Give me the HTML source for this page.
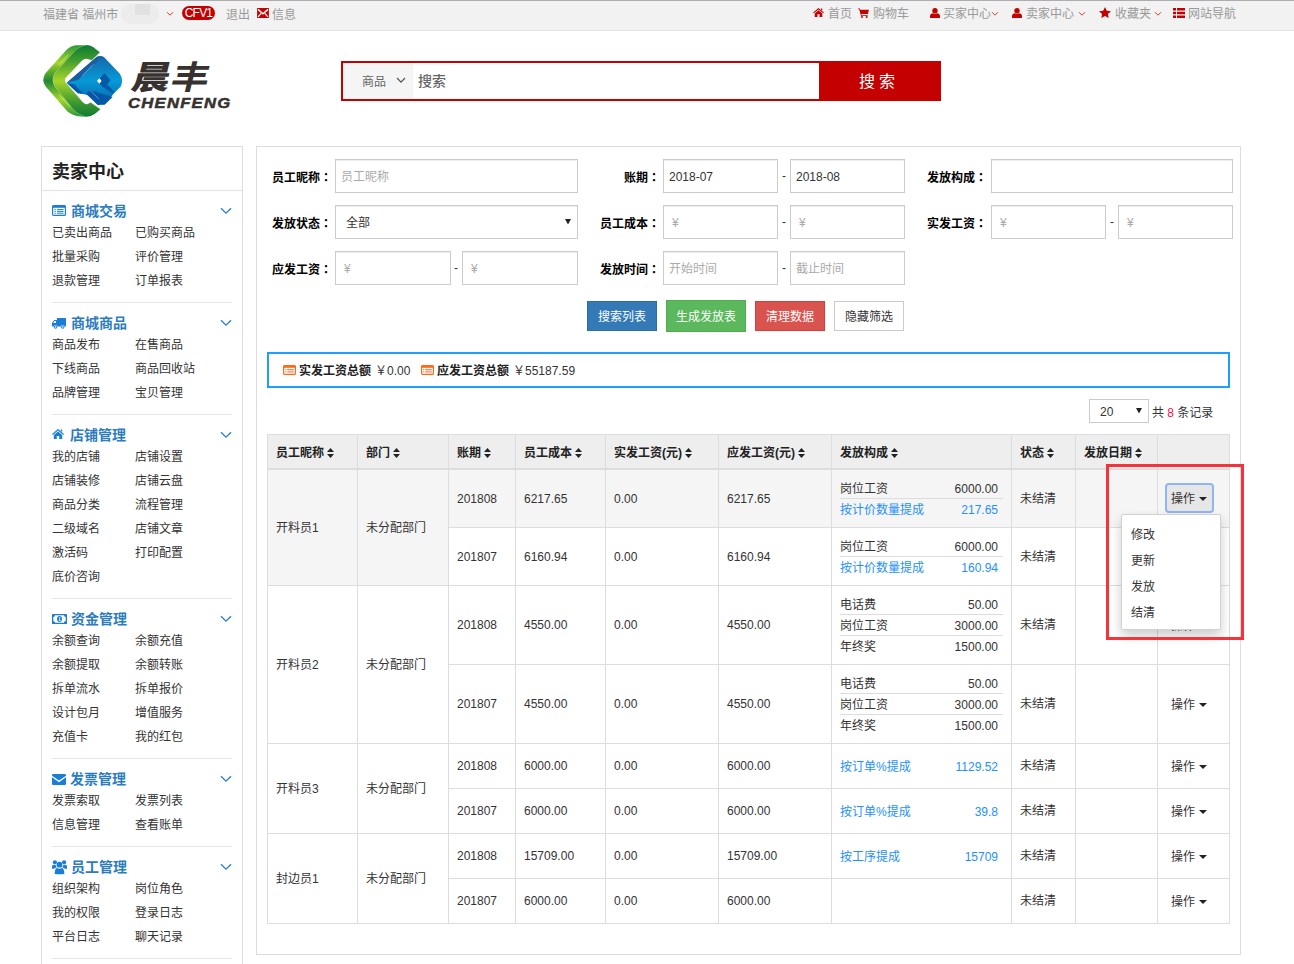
<!DOCTYPE html>
<html lang="zh-CN">
<head>
<meta charset="utf-8">
<title>卖家中心 - 工资发放</title>
<style>
*{box-sizing:border-box;margin:0;padding:0}
html,body{width:1294px;height:964px;overflow:hidden;background:#fff}
body{position:relative;font-family:"Liberation Sans","Noto Sans CJK SC",sans-serif;font-size:12px;color:#333;line-height:1}
.abs{position:absolute;white-space:nowrap}
svg{display:block;position:absolute;overflow:visible}
/* top bar */
#topbar{position:absolute;left:0;top:0;width:1294px;height:31px;background:#f2f2f2;border-top:1px solid #aeacb0;border-bottom:1px solid #e3e3e3}
#topbar .t{position:absolute;top:7px;height:14px;line-height:14px;font-size:12px;color:#999;white-space:nowrap}
#badge{position:absolute;left:182px;top:5px;width:33px;height:14px;border-radius:7px;background:#c40000;color:#fff;font-size:12px;line-height:14px;text-align:center;letter-spacing:-.8px;font-weight:normal}
/* search */
#search{position:absolute;left:341px;top:61px;width:600px;height:40px;border:2px solid #c40000;background:#fff}
#search .sel{position:absolute;left:0;top:0;width:70px;height:36px;background:#f5f5f5}
#search .btn{position:absolute;left:476px;top:-2px;width:122px;height:40px;background:#c40000;color:#fff;font-size:16px;line-height:40px;text-align:center;letter-spacing:4px;padding:1px 2px 0 0}
/* sidebar */
#side{position:absolute;left:41px;top:146px;width:202px;height:830px;border:1px solid #ddd;background:#fff}
#side h2{position:absolute;left:10px;top:15px;font-size:18px;line-height:20px;font-weight:bold;color:#222}
#side .hl{position:absolute;left:0;top:43px;width:200px;height:1px;background:#e2e2e2}
.sec{position:absolute;left:10px;width:180px}
.sec .hd{position:absolute;left:20px;top:0;font-size:14px;line-height:16px;font-weight:bold;color:#2b7cc1;white-space:nowrap}
.sec .lk{position:absolute;margin-top:1px;font-size:12px;line-height:14px;color:#333;white-space:nowrap}
.sec .dv{position:absolute;left:0;width:180px;height:1px;background:#e5e5e5}
/* main */
#main{position:absolute;left:256px;top:146px;width:985px;height:809px;border:1px solid #ddd;background:#fff}
.lb{position:absolute;font-weight:bold;color:#000;font-size:12px;line-height:14px;white-space:nowrap;text-align:right}
.ip{position:absolute;height:34px;border:1px solid #ccc;background:#fff;box-shadow:inset 0 1px 1px rgba(0,0,0,.075);font-size:12px;line-height:34px;padding-left:5px;color:#333;white-space:nowrap}
.ip.ph{color:#aaa}
.ds{position:absolute;font-size:12px;line-height:14px;color:#333}
.bt{position:absolute;top:154px;height:30px;font-size:12px;line-height:30px;text-align:center;color:#fff;white-space:nowrap}

#tb{position:absolute;left:10px;top:287px;width:963px;table-layout:fixed;border-collapse:separate;border-spacing:0;border-left:1px solid #ddd;border-top:1px solid #ddd;font-size:12px;color:#333}
#tb th{height:35px;background:#eee;border-right:1px solid #ddd;border-bottom:2px solid #ddd;text-align:left;padding:2px 0 0 8px;font-weight:bold;color:#222;white-space:nowrap;vertical-align:middle;line-height:14px}
#tb th .so{position:static;display:inline-block;vertical-align:-1px;margin-left:3px}
#tb td{border-right:1px solid #ddd;border-bottom:1px solid #ddd;padding:0 8px;vertical-align:middle;line-height:14px;white-space:nowrap;background:#fff}
#tb tr.hv td{background:#f5f5f5}
.it{height:21px;line-height:22px;border-bottom:1px solid #ddd;position:relative}
.it.last{height:20px;border-bottom:0}
.it b{position:absolute;right:5px;top:0;font-weight:normal}
.it.bl{color:#1e90ff}
.op{display:inline-block;margin-left:5px;color:#333;line-height:14px;position:relative;top:1px}
.op i{display:inline-block;width:0;height:0;border-left:4px solid transparent;border-right:4px solid transparent;border-top:4px solid #222;margin-left:4px;vertical-align:2px}
#dd li{height:26px;line-height:26px;padding-left:9px;font-size:12px;color:#333}
.cl{font-family:"Noto Sans CJK JP",sans-serif}
</style>
</head>
<body>

<!-- ============ TOP BAR ============ -->
<div id="topbar">
  <span class="t" style="left:43px">福建省 福州市</span>
  <span class="abs" style="left:121px;top:3px;width:38px;height:20px;border-radius:10px;background:#ececec;overflow:hidden"><span class="abs" style="left:14px;top:0;width:15px;height:11px;background:#e1e1e1"></span></span>
  <svg style="left:166px;top:10px" width="8" height="6" viewBox="0 0 8 6"><path d="M1 1.2 L4 4.2 L7 1.2" fill="none" stroke="#cf3a3a" stroke-width="1"/></svg>
  <span id="badge">CFV1</span>
  <span class="t" style="left:226px">退出</span>
  <svg style="left:257px;top:7px" width="12" height="10" viewBox="0 0 13 11"><rect x="0" y="0" width="13" height="11" fill="#c40000"/><path d="M1 1.5 L6.5 6.3 L12 1.5" fill="none" stroke="#fff" stroke-width="1.5"/><path d="M1 9.8 L4.6 6 M12 9.8 L8.4 6" fill="none" stroke="#fff" stroke-width="1.3"/></svg>
  <span class="t" style="left:272px">信息</span>

  <svg style="left:813px;top:7px" width="11" height="9" viewBox="0 0 12 10"><path d="M6 0 L12 5 L11.2 5.9 L6 1.6 L0.8 5.9 L0 5 Z M6 2.6 L10.2 6 V10 H7.2 V7 H4.8 V10 H1.8 V6 Z M8.7 .5 H10.2 V3 L8.7 1.8 Z" fill="#c40000"/></svg>
  <span class="t" style="left:828px;top:6px">首页</span>
  <svg style="left:858px;top:7px" width="11" height="10" viewBox="0 0 12 11"><path d="M0 0.5 H2 L2.5 2 H12 L10.8 6.5 H3.6 L3.9 7.6 H10.6 V8.6 H3.1 L1.3 1.5 H0 Z" fill="#c40000"/><circle cx="4.3" cy="9.8" r="1.1" fill="#c40000"/><circle cx="9.5" cy="9.8" r="1.1" fill="#c40000"/></svg>
  <span class="t" style="left:873px;top:6px">购物车</span>
  <svg style="left:930px;top:7px" width="10" height="10" viewBox="0 0 10 10"><circle cx="5" cy="2.7" r="2.7" fill="#c40000"/><path d="M0 10 V8.2 Q0 5.6 3 5.2 Q5 6.4 7 5.2 Q10 5.6 10 8.2 V10 Z" fill="#c40000"/></svg>
  <span class="t" style="left:943px;top:6px">买家中心</span>
  <svg style="left:991px;top:10px" width="8" height="6" viewBox="0 0 8 6"><path d="M1 1.2 L4 4.2 L7 1.2" fill="none" stroke="#cf3a3a" stroke-width="1"/></svg>
  <svg style="left:1012px;top:7px" width="10" height="10" viewBox="0 0 10 10"><circle cx="5" cy="2.7" r="2.7" fill="#c40000"/><path d="M0 10 V8.2 Q0 5.6 3 5.2 Q5 6.4 7 5.2 Q10 5.6 10 8.2 V10 Z" fill="#c40000"/></svg>
  <span class="t" style="left:1026px;top:6px">卖家中心</span>
  <svg style="left:1078px;top:10px" width="8" height="6" viewBox="0 0 8 6"><path d="M1 1.2 L4 4.2 L7 1.2" fill="none" stroke="#cf3a3a" stroke-width="1"/></svg>
  <svg style="left:1099px;top:6px" width="12" height="11" viewBox="0 0 12 11"><path d="M6 0 L7.8 3.8 L12 4.3 L8.9 7.1 L9.7 11 L6 9 L2.3 11 L3.1 7.1 L0 4.3 L4.2 3.8 Z" fill="#c40000"/></svg>
  <span class="t" style="left:1115px;top:6px">收藏夹</span>
  <svg style="left:1154px;top:10px" width="8" height="6" viewBox="0 0 8 6"><path d="M1 1.2 L4 4.2 L7 1.2" fill="none" stroke="#cf3a3a" stroke-width="1"/></svg>
  <svg style="left:1173px;top:7px" width="12" height="10" viewBox="0 0 12 10"><path d="M0 0 H3 V2.4 H0 Z M4 0 H12 V2.4 H4 Z M0 3.8 H3 V6.2 H0 Z M4 3.8 H12 V6.2 H4 Z M0 7.6 H3 V10 H0 Z M4 7.6 H12 V10 H4 Z" fill="#c40000"/></svg>
  <span class="t" style="left:1188px;top:6px">网站导航</span>
</div>

<!-- ============ LOGO ============ -->
<div id="logo" class="abs" style="left:36px;top:38px;width:200px;height:86px">
  <svg style="left:0;top:0" width="100" height="86" viewBox="0 0 1121 964">
    <defs>
      <linearGradient id="gA" x1="0" y1="0" x2="0" y2="1"><stop offset="0" stop-color="#2a9a3c"/><stop offset=".24" stop-color="#a4d42a"/><stop offset=".5" stop-color="#1f8836"/><stop offset=".76" stop-color="#a4d42a"/><stop offset="1" stop-color="#2a9a3c"/></linearGradient>
      <linearGradient id="gB" x1="0" y1="0" x2="0" y2="1"><stop offset="0" stop-color="#0d7a33"/><stop offset=".2" stop-color="#3f9a2f"/><stop offset=".5" stop-color="#a6d52b"/><stop offset=".8" stop-color="#3f9a2f"/><stop offset="1" stop-color="#0d7a33"/></linearGradient>
      <linearGradient id="gC" x1="0" y1="0" x2="0" y2="1"><stop offset="0" stop-color="#1766ae"/><stop offset=".5" stop-color="#069ad6"/><stop offset="1" stop-color="#0a62ae"/></linearGradient>
    </defs>
    <!-- green C : side band -->
    <path d="M450 80 Q385 88 340 135 L108 392 Q55 468 108 545 L350 822 Q410 876 505 880 L565 882 Q462 852 420 802 L213 547 Q163 470 213 393 L440 140 Q482 100 560 80 Z" fill="url(#gA)"/>
    <!-- green C : front band -->
    <path d="M560 80 Q482 100 440 140 L213 393 Q163 470 213 547 L420 802 Q462 852 565 882 Q625 880 662 850 L722 800 L612 722 L575 742 Q545 748 520 716 L335 502 Q312 470 338 440 L520 250 Q545 224 580 234 L625 250 L716 160 L640 100 Q600 78 560 80 Z" fill="url(#gB)"/>
    <path d="M255 300 L360 190 M262 640 L380 770" stroke="#eaf7c8" stroke-width="7" stroke-linecap="round" opacity=".85"/>
    <!-- blue body -->
    <path d="M345 502 L682 210 Q722 195 762 212 L940 402 Q985 472 950 545 L880 615 L770 745 L690 748 L590 640 L500 625 Z" fill="url(#gC)"/>
    <path d="M345 502 L682 210 L745 206 L470 470 Z" fill="#1b5e9f"/>
    <path d="M345 504 L432 520 L525 622 L470 622 Z" fill="#0557a8"/>
    <path d="M560 625 L602 585 L860 662 L770 745 L690 748 Z" fill="#0557a8"/>
    <path d="M768 395 L835 470 L800 522 L882 612 L850 616 L738 540 L690 480 Z" fill="#0459a9"/>
    <path d="M684 480 L712 450 L736 482 L710 512 Z" fill="#fff"/>
    <path d="M520 420 L640 300 M610 590 L700 680" stroke="#d8efff" stroke-width="6" stroke-linecap="round" opacity=".8"/>
  </svg>
  <span class="abs" id="lg1" style="left:93px;top:13px;font-family:'Noto Sans CJK SC',sans-serif;font-weight:700;font-size:38px;line-height:42px;color:#37312f;transform:skewX(-14deg) scaleY(.86);transform-origin:0 100%;letter-spacing:1px"><span style="font-weight:900">晨</span>丰</span>
  <span class="abs" id="lg2" style="left:92px;top:57px;font-family:'Liberation Sans',sans-serif;font-weight:bold;font-style:italic;font-size:14.6px;line-height:16px;color:#37312f;letter-spacing:1.1px;-webkit-text-stroke:.5px #37312f;transform:scaleX(1.14);transform-origin:0 50%">CHENFENG</span>
</div>

<!-- ============ SEARCH ============ -->
<div id="search">
  <div class="sel"></div>
  <span class="abs" style="left:19px;top:12px;font-size:12px;line-height:14px;color:#666">商品</span>
  <svg style="left:53px;top:14px" width="10" height="7" viewBox="0 0 10 7"><path d="M1 1 L5 5.2 L9 1" fill="none" stroke="#555" stroke-width="1.2"/></svg>
  <span class="abs" style="left:75px;top:10px;font-size:14px;line-height:16px;color:#666;font-weight:500">搜索</span>
  <div class="btn">搜索</div>
</div>

<!-- ============ SIDEBAR ============ -->
<div id="side">
  <h2>卖家中心</h2>
  <div class="hl"></div>
  <div class="sec" style="top:56px;height:100px">
    <svg style="left:0;top:2px" width="14" height="11" viewBox="0 0 14 11"><rect x=".6" y=".6" width="12.8" height="9.8" rx="1" fill="none" stroke="#1b7ed6" stroke-width="1.2"/><rect x=".6" y=".6" width="12.8" height="2.2" fill="#1b7ed6"/><path d="M2.5 4.6 H3.8 M5 4.6 H11.6 M2.5 6.4 H3.8 M5 6.4 H11.6 M2.5 8.2 H3.8 M5 8.2 H11.6" stroke="#1b7ed6" stroke-width="1"/></svg>
    <span class="hd" style="left:19px">商城交易</span>
    <svg style="left:168px;top:4px" width="12" height="8" viewBox="0 0 12 8"><path d="M1 1.2 L6 6.2 L11 1.2" fill="none" stroke="#2b7cc1" stroke-width="1.3"/></svg>
    <span class="lk" style="left:0;top:22px">已卖出商品</span><span class="lk" style="left:83px;top:22px">已购买商品</span>
    <span class="lk" style="left:0;top:46px">批量采购</span><span class="lk" style="left:83px;top:46px">评价管理</span>
    <span class="lk" style="left:0;top:70px">退款管理</span><span class="lk" style="left:83px;top:70px">订单报表</span>
    <div class="dv" style="top:99px"></div>
  </div>
  <div class="sec" style="top:168px;height:100px">
    <svg style="left:0;top:3px" width="14" height="11" viewBox="0 0 14 11"><path d="M5 0 H13.4 Q14 0 14 .6 V8.4 H12.6 A1.9 1.9 0 0 0 8.9 8.4 H5.4 A1.9 1.9 0 0 0 1.7 8.4 H0 V5 L1.8 2.4 Q2.1 2 2.6 2 H5 Z M1.2 5 H4 V3 H2.7 Z" fill="#1b7ed6" fill-rule="evenodd"/><circle cx="3.55" cy="9" r="1.7" fill="#1b7ed6"/><circle cx="10.75" cy="9" r="1.7" fill="#1b7ed6"/><circle cx="3.55" cy="9" r=".8" fill="#fff"/><circle cx="10.75" cy="9" r=".8" fill="#fff"/></svg>
    <span class="hd" style="left:19px">商城商品</span>
    <svg style="left:168px;top:4px" width="12" height="8" viewBox="0 0 12 8"><path d="M1 1.2 L6 6.2 L11 1.2" fill="none" stroke="#2b7cc1" stroke-width="1.3"/></svg>
    <span class="lk" style="left:0;top:22px">商品发布</span><span class="lk" style="left:83px;top:22px">在售商品</span>
    <span class="lk" style="left:0;top:46px">下线商品</span><span class="lk" style="left:83px;top:46px">商品回收站</span>
    <span class="lk" style="left:0;top:70px">品牌管理</span><span class="lk" style="left:83px;top:70px">宝贝管理</span>
    <div class="dv" style="top:99px"></div>
  </div>
  <div class="sec" style="top:280px;height:172px">
    <svg style="left:0;top:2px" width="12" height="10" viewBox="0 0 12 10"><path d="M6 0 L12 5 L11.2 5.9 L6 1.6 L0.8 5.9 L0 5 Z M6 2.6 L10.2 6 V10 H7.2 V7 H4.8 V10 H1.8 V6 Z M8.7 .5 H10.2 V3 L8.7 1.8 Z" fill="#1b7ed6"/></svg>
    <span class="hd" style="left:18px">店铺管理</span>
    <svg style="left:168px;top:4px" width="12" height="8" viewBox="0 0 12 8"><path d="M1 1.2 L6 6.2 L11 1.2" fill="none" stroke="#2b7cc1" stroke-width="1.3"/></svg>
    <span class="lk" style="left:0;top:22px">我的店铺</span><span class="lk" style="left:83px;top:22px">店铺设置</span>
    <span class="lk" style="left:0;top:46px">店铺装修</span><span class="lk" style="left:83px;top:46px">店铺云盘</span>
    <span class="lk" style="left:0;top:70px">商品分类</span><span class="lk" style="left:83px;top:70px">流程管理</span>
    <span class="lk" style="left:0;top:94px">二级域名</span><span class="lk" style="left:83px;top:94px">店铺文章</span>
    <span class="lk" style="left:0;top:118px">激活码</span><span class="lk" style="left:83px;top:118px">打印配置</span>
    <span class="lk" style="left:0;top:142px">底价咨询</span>
    <div class="dv" style="top:171px"></div>
  </div>
  <div class="sec" style="top:464px;height:148px">
    <svg style="left:0;top:3px" width="15" height="10" viewBox="0 0 15 10"><rect x="0" y="0" width="15" height="10" rx=".6" fill="#1b7ed6"/><path d="M3 1.3 H12 A1.7 1.7 0 0 0 13.7 3 V7 A1.7 1.7 0 0 0 12 8.7 H3 A1.7 1.7 0 0 0 1.3 7 V3 A1.7 1.7 0 0 0 3 1.3 Z" fill="#fff"/><ellipse cx="7.5" cy="5" rx="2.5" ry="3" fill="#1b7ed6"/><path d="M6.9 3.9 L7.7 3.4 V6.5 M6.8 6.6 H8.6" stroke="#fff" stroke-width=".8" fill="none"/></svg>
    <span class="hd" style="left:19px">资金管理</span>
    <svg style="left:168px;top:4px" width="12" height="8" viewBox="0 0 12 8"><path d="M1 1.2 L6 6.2 L11 1.2" fill="none" stroke="#2b7cc1" stroke-width="1.3"/></svg>
    <span class="lk" style="left:0;top:22px">余额查询</span><span class="lk" style="left:83px;top:22px">余额充值</span>
    <span class="lk" style="left:0;top:46px">余额提取</span><span class="lk" style="left:83px;top:46px">余额转账</span>
    <span class="lk" style="left:0;top:70px">拆单流水</span><span class="lk" style="left:83px;top:70px">拆单报价</span>
    <span class="lk" style="left:0;top:94px">设计包月</span><span class="lk" style="left:83px;top:94px">增值服务</span>
    <span class="lk" style="left:0;top:118px">充值卡</span><span class="lk" style="left:83px;top:118px">我的红包</span>
    <div class="dv" style="top:147px"></div>
  </div>
  <div class="sec" style="top:624px;height:76px">
    <svg style="left:0;top:3px" width="14" height="11" viewBox="0 0 14 11"><path d="M0 1.2 Q0 0 1.2 0 H12.8 Q14 0 14 1.2 V1.7 L7 6.6 L0 1.7 Z M0 3.3 L7 8.2 L14 3.3 V9.8 Q14 11 12.8 11 H1.2 Q0 11 0 9.8 Z" fill="#1b7ed6"/></svg>
    <span class="hd" style="left:18px">发票管理</span>
    <svg style="left:168px;top:4px" width="12" height="8" viewBox="0 0 12 8"><path d="M1 1.2 L6 6.2 L11 1.2" fill="none" stroke="#2b7cc1" stroke-width="1.3"/></svg>
    <span class="lk" style="left:0;top:22px">发票索取</span><span class="lk" style="left:83px;top:22px">发票列表</span>
    <span class="lk" style="left:0;top:46px">信息管理</span><span class="lk" style="left:83px;top:46px">查看账单</span>
    <div class="dv" style="top:75px"></div>
  </div>
  <div class="sec" style="top:712px;height:100px">
    <svg style="left:0;top:1px" width="15" height="14" viewBox="0 0 15 14"><circle cx="7.5" cy="4.7" r="2.9" fill="#1b7ed6"/><circle cx="2.9" cy="2.3" r="2.1" fill="#1b7ed6"/><circle cx="12.1" cy="2.3" r="2.1" fill="#1b7ed6"/><path d="M2.7 14 Q2.6 8.6 5.2 8 Q7.5 9.4 9.8 8 Q12.4 8.6 12.3 14 Q7.5 14.4 2.7 14 Z" fill="#1b7ed6"/><path d="M0 8.8 V6.8 Q0 4.8 1.5 4.8 Q2.8 5.5 4 5 Q4 6.6 4.8 7.4 Q2.6 7.8 2.2 8.8 Z M15 8.8 V6.8 Q15 4.8 13.5 4.8 Q12.2 5.5 11 5 Q11 6.6 10.2 7.4 Q12.4 7.8 12.8 8.8 Z" fill="#1b7ed6"/></svg>
    <span class="hd" style="left:19px">员工管理</span>
    <svg style="left:168px;top:4px" width="12" height="8" viewBox="0 0 12 8"><path d="M1 1.2 L6 6.2 L11 1.2" fill="none" stroke="#2b7cc1" stroke-width="1.3"/></svg>
    <span class="lk" style="left:0;top:22px">组织架构</span><span class="lk" style="left:83px;top:22px">岗位角色</span>
    <span class="lk" style="left:0;top:46px">我的权限</span><span class="lk" style="left:83px;top:46px">登录日志</span>
    <span class="lk" style="left:0;top:70px">平台日志</span><span class="lk" style="left:83px;top:70px">聊天记录</span>
    <div class="dv" style="top:99px"></div>
  </div>
</div>

<!-- ============ MAIN ============ -->
<div id="main">
  <span class="lb" style="left:15px;top:23px">员工昵称<span class="cl" lang="ja">：</span></span>
  <div class="ip ph" style="left:78px;top:12px;width:243px">员工昵称</div>
  <span class="lb" style="left:15px;top:69px">发放状态<span class="cl" lang="ja">：</span></span>
  <div class="ip" style="left:78px;top:58px;width:243px;padding-left:10px">全部</div>
  <svg style="left:308px;top:72px" width="6" height="6" viewBox="0 0 7 7"><path d="M0 0 H7 L3.5 6.5 Z" fill="#222"/></svg>
  <span class="lb" style="left:15px;top:115px">应发工资<span class="cl" lang="ja">：</span></span>
  <div class="ip ph" style="left:78px;top:104px;width:116px;padding-left:8px">¥</div>
  <span class="ds" style="left:197px;top:114px">-</span>
  <div class="ip ph" style="left:205px;top:104px;width:116px;padding-left:8px">¥</div>
  <span class="lb" style="left:367px;top:23px">账期<span class="cl" lang="ja">：</span></span>
  <div class="ip" style="left:406px;top:12px;width:115px">2018-07</div>
  <span class="ds" style="left:525px;top:22px">-</span>
  <div class="ip" style="left:533px;top:12px;width:115px">2018-08</div>
  <span class="lb" style="left:343px;top:69px">员工成本<span class="cl" lang="ja">：</span></span>
  <div class="ip ph" style="left:406px;top:58px;width:115px;padding-left:8px">¥</div>
  <span class="ds" style="left:525px;top:68px">-</span>
  <div class="ip ph" style="left:533px;top:58px;width:115px;padding-left:8px">¥</div>
  <span class="lb" style="left:343px;top:115px">发放时间<span class="cl" lang="ja">：</span></span>
  <div class="ip ph" style="left:406px;top:104px;width:115px">开始时间</div>
  <span class="ds" style="left:525px;top:114px">-</span>
  <div class="ip ph" style="left:533px;top:104px;width:115px">截止时间</div>
  <span class="lb" style="left:670px;top:23px">发放构成<span class="cl" lang="ja">：</span></span>
  <div class="ip" style="left:734px;top:12px;width:242px"></div>
  <span class="lb" style="left:670px;top:69px">实发工资<span class="cl" lang="ja">：</span></span>
  <div class="ip ph" style="left:734px;top:58px;width:115px;padding-left:8px">¥</div>
  <span class="ds" style="left:853px;top:68px">-</span>
  <div class="ip ph" style="left:861px;top:58px;width:115px;padding-left:8px">¥</div>
  <div class="bt" style="left:330px;width:70px;background:#337ab7;border:1px solid #2e6da4;line-height:30px">搜索列表</div>
  <div class="bt" style="left:409px;top:153px;height:32px;width:80px;background:#5cb85c;border:1px solid #4cae4c;line-height:32px">生成发放表</div>
  <div class="bt" style="left:498px;width:70px;background:#d9534f;border:1px solid #d43f3a;line-height:30px">清理数据</div>
  <div class="bt" style="left:577px;width:70px;background:#fff;border:1px solid #ccc;color:#333;line-height:30px">隐藏筛选</div>
  <div id="info" style="position:absolute;left:10px;top:205px;width:963px;height:36px;border:2px solid #1e9fff;background:#fff">
    <svg style="left:14px;top:11px" width="13" height="10" viewBox="0 0 13 10"><rect x=".6" y=".6" width="11.8" height="8.8" rx="1" fill="#fff" stroke="#ff6a14" stroke-width="1.2"/><rect x=".6" y=".6" width="11.8" height="2.2" fill="#ff6a14"/><path d="M2.2 4.7 H3.3 M4.2 4.7 H10.8 M2.2 6.9 H3.3 M4.2 6.9 H10.8" stroke="#ff7f50" stroke-width="1.3"/></svg>
    <span class="abs" style="left:30px;top:10px;line-height:14px;font-weight:bold;color:#222">实发工资总额</span><span class="abs" style="left:106px;top:10px;line-height:14px;color:#333">￥0.00</span>
    <svg style="left:152px;top:11px" width="13" height="10" viewBox="0 0 13 10"><rect x=".6" y=".6" width="11.8" height="8.8" rx="1" fill="#fff" stroke="#ff6a14" stroke-width="1.2"/><rect x=".6" y=".6" width="11.8" height="2.2" fill="#ff6a14"/><path d="M2.2 4.7 H3.3 M4.2 4.7 H10.8 M2.2 6.9 H3.3 M4.2 6.9 H10.8" stroke="#ff7f50" stroke-width="1.3"/></svg>
    <span class="abs" style="left:168px;top:10px;line-height:14px;font-weight:bold;color:#222">应发工资总额</span><span class="abs" style="left:244px;top:10px;line-height:14px;color:#333">￥55187.59</span>
  </div>
  <div class="abs" style="left:832px;top:252px;width:60px;height:24px;border:1px solid #ccc;background:#fff;line-height:24px;padding-left:10px;color:#333">20</div>
  <svg style="left:879px;top:261px" width="6" height="6" viewBox="0 0 7 7"><path d="M0 0 H7 L3.5 6.5 Z" fill="#222"/></svg>
  <span class="abs" style="left:895px;top:259px;line-height:14px;color:#333">共 <span style="color:#f0144b">8</span> 条记录</span>
  <table id="tb">
    <colgroup><col style="width:90px"><col style="width:91px"><col style="width:67px"><col style="width:90px"><col style="width:113px"><col style="width:113px"><col style="width:180px"><col style="width:64px"><col style="width:82px"><col style="width:72px"></colgroup>
    <thead><tr><th>员工昵称<svg class="so" width="7" height="10" viewBox="0 0 7 10"><path d="M3.5 0 L7 4 H0 Z M0 6 H7 L3.5 10 Z" fill="#222"/></svg></th><th>部门<svg class="so" width="7" height="10" viewBox="0 0 7 10"><path d="M3.5 0 L7 4 H0 Z M0 6 H7 L3.5 10 Z" fill="#222"/></svg></th><th>账期<svg class="so" width="7" height="10" viewBox="0 0 7 10"><path d="M3.5 0 L7 4 H0 Z M0 6 H7 L3.5 10 Z" fill="#222"/></svg></th><th>员工成本<svg class="so" width="7" height="10" viewBox="0 0 7 10"><path d="M3.5 0 L7 4 H0 Z M0 6 H7 L3.5 10 Z" fill="#222"/></svg></th><th>实发工资(元)<svg class="so" width="7" height="10" viewBox="0 0 7 10"><path d="M3.5 0 L7 4 H0 Z M0 6 H7 L3.5 10 Z" fill="#222"/></svg></th><th>应发工资(元)<svg class="so" width="7" height="10" viewBox="0 0 7 10"><path d="M3.5 0 L7 4 H0 Z M0 6 H7 L3.5 10 Z" fill="#222"/></svg></th><th>发放构成<svg class="so" width="7" height="10" viewBox="0 0 7 10"><path d="M3.5 0 L7 4 H0 Z M0 6 H7 L3.5 10 Z" fill="#222"/></svg></th><th>状态<svg class="so" width="7" height="10" viewBox="0 0 7 10"><path d="M3.5 0 L7 4 H0 Z M0 6 H7 L3.5 10 Z" fill="#222"/></svg></th><th>发放日期<svg class="so" width="7" height="10" viewBox="0 0 7 10"><path d="M3.5 0 L7 4 H0 Z M0 6 H7 L3.5 10 Z" fill="#222"/></svg></th><th></th></tr></thead>
    <tbody>
      <tr style="height:58px" class="hv"><td rowspan="2">开料员1</td><td rowspan="2">未分配部门</td><td>201808</td><td>6217.65</td><td>0.00</td><td>6217.65</td><td><div class="it"><span>岗位工资</span><b>6000.00</b></div><div class="it bl last"><span>按计价数量提成</span><b>217.65</b></div></td><td>未结清</td><td></td><td><span class="op" style="visibility:hidden">操作<i></i></span></td></tr>
      <tr style="height:58px"><td>201807</td><td>6160.94</td><td>0.00</td><td>6160.94</td><td><div class="it"><span>岗位工资</span><b>6000.00</b></div><div class="it bl last"><span>按计价数量提成</span><b>160.94</b></div></td><td>未结清</td><td></td><td><span class="op">操作<i></i></span></td></tr>
      <tr style="height:79px"><td rowspan="2">开料员2</td><td rowspan="2">未分配部门</td><td>201808</td><td>4550.00</td><td>0.00</td><td>4550.00</td><td><div class="it"><span>电话费</span><b>50.00</b></div><div class="it"><span>岗位工资</span><b>3000.00</b></div><div class="it last"><span>年终奖</span><b>1500.00</b></div></td><td>未结清</td><td></td><td><span class="op">操作<i></i></span></td></tr>
      <tr style="height:79px"><td>201807</td><td>4550.00</td><td>0.00</td><td>4550.00</td><td><div class="it"><span>电话费</span><b>50.00</b></div><div class="it"><span>岗位工资</span><b>3000.00</b></div><div class="it last"><span>年终奖</span><b>1500.00</b></div></td><td>未结清</td><td></td><td><span class="op">操作<i></i></span></td></tr>
      <tr style="height:45px"><td rowspan="2">开料员3</td><td rowspan="2">未分配部门</td><td>201808</td><td>6000.00</td><td>0.00</td><td>6000.00</td><td><div class="it bl last"><span>按订单%提成</span><b>1129.52</b></div></td><td>未结清</td><td></td><td><span class="op">操作<i></i></span></td></tr>
      <tr style="height:45px"><td>201807</td><td>6000.00</td><td>0.00</td><td>6000.00</td><td><div class="it bl last"><span>按订单%提成</span><b>39.8</b></div></td><td>未结清</td><td></td><td><span class="op">操作<i></i></span></td></tr>
      <tr style="height:45px"><td rowspan="2">封边员1</td><td rowspan="2">未分配部门</td><td>201808</td><td>15709.00</td><td>0.00</td><td>15709.00</td><td><div class="it bl last"><span>按工序提成</span><b>15709</b></div></td><td>未结清</td><td></td><td><span class="op">操作<i></i></span></td></tr>
      <tr style="height:45px"><td>201807</td><td>6000.00</td><td>0.00</td><td>6000.00</td><td></td><td>未结清</td><td></td><td><span class="op">操作<i></i></span></td></tr>
    </tbody>
  </table>
</div>
<!-- ============ DROPDOWN + ANNOTATION ============ -->
<div class="abs" id="actbtn" style="left:1165px;top:483px;width:49px;height:30px;border:2px solid #8fb5f7;border-radius:4px;background:#e6e6e6"></div>
<span class="abs op" style="left:1171px;top:492px;margin:0;position:absolute">操作<i></i></span>
<ul id="dd" style="position:absolute;left:1121px;top:514px;width:100px;height:116px;list-style:none;background:#fff;border:1px solid rgba(0,0,0,.18);border-radius:2px;box-shadow:0 6px 12px rgba(0,0,0,.2);padding:7px 0 3px">
  <li>修改</li><li>更新</li><li>发放</li><li>结清</li>
</ul>
<div class="abs" id="redbox" style="left:1106px;top:464px;width:138px;height:176px;border:3px solid #f4333a"></div>

</body>
</html>
